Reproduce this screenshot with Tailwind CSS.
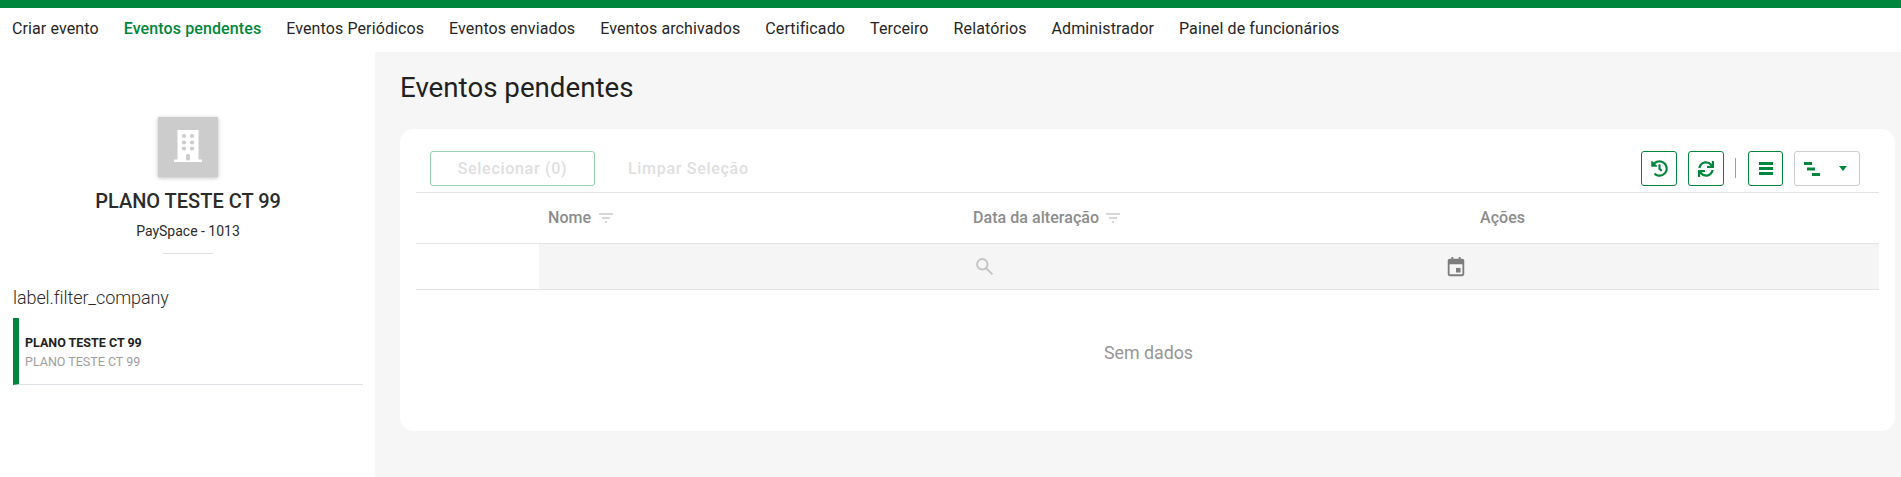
<!DOCTYPE html>
<html lang="pt">
<head>
<meta charset="utf-8">
<script src="https://cdn.jsdelivr.net/npm/@tailwindcss/browser@4"></script>
</head>
<body class="font-['Roboto',sans-serif] bg-white text-[#212121]">
<div class="w-[1901px] h-[477px] overflow-hidden flex flex-col">
  <div class="h-2 bg-[#00873d]"></div>
  <nav class="h-11 flex items-center pl-3 gap-[25px] text-[16px] tracking-[0.11px] leading-none text-[#262626] pb-[3px]">
    <span>Criar evento</span>
    <span class="font-medium text-[#00873d]">Eventos pendentes</span>
    <span>Eventos Periódicos</span>
    <span>Eventos enviados</span>
    <span>Eventos archivados</span>
    <span>Certificado</span>
    <span>Terceiro</span>
    <span>Relatórios</span>
    <span>Administrador</span>
    <span>Painel de funcionários</span>
  </nav>
  <div class="flex flex-1">
    <aside class="w-[375px] pl-[13px] pr-3 pt-[65px] flex flex-col">
      <div class="flex flex-col items-center">
        <div class="w-[60px] h-[60px] bg-[#cccccc] shadow-[0_1px_4px_rgba(0,0,0,0.25)] flex items-center justify-center">
          <svg class="mb-[2px]" width="28" height="32" viewBox="0 0 28 32" fill="#fff">
            <path d="M3.500 0h21v29.500H28V32H0v-2.500h3.500z"/>
            <g fill="#cccccc">
              <circle cx="10" cy="6" r="2.100"/><circle cx="18" cy="6" r="2.100"/>
              <circle cx="10" cy="12.500" r="2.100"/><circle cx="18" cy="12.500" r="2.100"/>
              <circle cx="10" cy="18.500" r="2.100"/><circle cx="18" cy="18.500" r="2.100"/>
              <rect x="12" y="24" width="4" height="6.500" rx="1.500"/>
            </g>
          </svg>
        </div>
        <div class="mt-[14px] text-[20px] leading-[20px] font-medium text-[#2b2b2b]">PLANO TESTE CT 99</div>
        <div class="mt-[12px] text-[14px] leading-[16px] text-[#2b2b2b]">PaySpace - 1013</div>
        <div class="mt-[14px] w-[50px] h-px bg-[#dddddd]"></div>
      </div>
      <div class="mt-[32px] text-[18px] tracking-[-0.1px] leading-[24px] font-light text-[#2b2b2b]">label.filter_company</div>
      <div class="mt-[8px] h-[67px] border-b border-[#e0e0e6] border-l-[6px] border-l-[#00873d] pl-[6px] pt-[17px] flex flex-col">
        <span class="text-[12.5px] leading-[16px] font-bold text-[#212121]">PLANO TESTE CT 99</span>
        <span class="mt-[3px] text-[12.5px] leading-[16px] text-[#9e9e9e]">PLANO TESTE CT 99</span>
      </div>
    </aside>
    <main class="flex-1 bg-[#f6f6f6] pl-[25px] pr-[6px] pt-5 flex flex-col">
      <h1 class="text-[27.7px] leading-[32px] text-[#212121]">Eventos pendentes</h1>
      <section class="mt-[25px] h-[302px] bg-white rounded-[14px] px-[16px] pt-[22px]">
        <div class="h-[41px] flex items-start pl-[14px] pr-[19px]">
          <button class="w-[165px] h-[35px] border border-[#99d0b1] rounded-[3px] text-[16px] font-medium tracking-[0.7px] text-[#e0e0e0]">Selecionar (0)</button>
          <span class="ml-[33px] h-[35px] flex items-center text-[16px] font-medium tracking-[0.7px] text-[#e0e0e0]">Limpar Seleção</span>
          <div class="ml-auto flex items-start">
            <button class="w-9 h-[35px] border border-[#00873d] rounded-[3px] flex items-center justify-center">
              <svg width="17" height="17" viewBox="0 0 512 512" fill="#00873d"><path d="M504 255.531c.253 136.64-111.18 248.372-247.82 248.468-59.015.042-113.223-20.53-155.822-54.911-11.077-8.94-11.905-25.541-1.839-35.607l11.267-11.267c8.609-8.609 22.353-9.551 31.891-1.984C173.062 425.135 212.781 440 256 440c101.705 0 184-82.311 184-184 0-101.705-82.311-184-184-184-48.814 0-93.149 18.969-126.068 49.932l50.754 50.754c10.08 10.08 2.941 27.314-11.313 27.314H24c-8.837 0-16-7.163-16-16V38.627c0-14.254 17.234-21.393 27.314-11.314l49.372 49.372C129.209 34.136 189.552 8 256 8c136.81 0 247.747 110.78 248 247.531zm-180.912 78.784l9.823-12.63c8.138-10.463 6.253-25.542-4.21-33.679L288 256.349V152c0-13.255-10.745-24-24-24h-16c-13.255 0-24 10.745-24 24v135.651l65.409 50.874c10.463 8.137 25.541 6.253 33.679-4.21z"/></svg>
            </button>
            <button class="ml-[11px] w-9 h-[35px] border border-[#00873d] rounded-[3px] flex items-center justify-center">
              <svg width="16" height="16" viewBox="0 0 512 512" fill="#00873d"><path d="M440.65 12.57l4 82.77A247.16 247.16 0 0 0 255.83 8C134.73 8 33.91 94.92 12.29 209.82A12 12 0 0 0 24.09 224h49.05a12 12 0 0 0 11.67-9.26 175.91 175.91 0 0 1 317-56.94l-101.46-4.86a12 12 0 0 0-12.57 12v47.41a12 12 0 0 0 12 12H500a12 12 0 0 0 12-12V12a12 12 0 0 0-12-12h-47.37a12 12 0 0 0-11.98 12.57zM255.83 432a175.61 175.61 0 0 1-146-77.8l101.8 4.87a12 12 0 0 0 12.57-12v-47.4a12 12 0 0 0-12-12H12a12 12 0 0 0-12 12V500a12 12 0 0 0 12 12h47.35a12 12 0 0 0 12-12.6l-4.15-82.57A247.17 247.17 0 0 0 255.83 504c121.11 0 221.93-86.92 243.55-201.82a12 12 0 0 0-11.8-14.18h-49.05a12 12 0 0 0-11.67 9.26A175.86 175.86 0 0 1 255.83 432z"/></svg>
            </button>
            <div class="ml-[11px] mt-[7px] w-px h-[20px] bg-[#9e9e9e]"></div>
            <button class="ml-3 w-[35px] h-[35px] border border-[#00873d] rounded-[3px] flex flex-col items-center justify-center gap-[1.500px]">
              <span class="w-[14px] h-[3.500px] bg-[#00873d]"></span>
              <span class="w-[14px] h-[3.500px] bg-[#00873d]"></span>
              <span class="w-[14px] h-[3.500px] bg-[#00873d]"></span>
            </button>
            <button class="ml-[11px] w-[66px] h-[35px] border border-[#cccccc] rounded-[3px] flex items-center pl-[9px]">
              <svg width="16" height="14" viewBox="0 0 16 14" fill="#00873d"><rect x="0" y="0" width="8" height="3"/><rect x="3" y="5.500" width="8" height="3"/><rect x="8" y="11" width="8" height="3"/></svg>
              <svg class="ml-[19px]" width="8" height="5" viewBox="0 0 8 5" fill="#00873d"><path d="M0 0h8L4 5z"/></svg>
            </button>
          </div>
        </div>
        <div class="border-t border-[#e3e3e3] h-[51px] pb-px grid grid-cols-[123px_425px_506px_1fr] items-center text-[16px] tracking-[0.05px] font-medium text-[#8c8c8c]">
          <div></div>
          <div class="pl-[9px] flex items-center gap-[8px]">Nome
            <svg width="14" height="10" viewBox="0 0 14 10" stroke="#b0b0b0" stroke-width="1"><path d="M0 1h14M3 5h8M6 9h2"/></svg>
          </div>
          <div class="pl-[9px] flex items-center gap-[7px]">Data da alteração
            <svg width="14" height="10" viewBox="0 0 14 10" stroke="#b0b0b0" stroke-width="1"><path d="M0 1h14M3 5h8M6 9h2"/></svg>
          </div>
          <div class="pl-[10px]">Ações</div>
        </div>
        <div class="border-y border-[#e3e3e3] h-[47px] grid grid-cols-[123px_425px_1fr] items-center">
          <div></div>
          <div class="col-start-2 col-end-4 h-full bg-[#f5f5f5] grid grid-cols-[425px_1fr] items-center">
            <div></div>
            <div class="flex items-center">
              <svg class="ml-[10px]" width="21" height="21" viewBox="0 0 24 24" fill="none" stroke="#c4c4c4" stroke-width="2.200"><circle cx="9.500" cy="9.500" r="6"/><path d="M14 14l7 7"/></svg>
              <svg class="ml-[450px]" width="22" height="22" viewBox="0 0 24 24" fill="#7d7d7d"><path d="M7 1h2v2h6V1h2v2h2a2 2 0 0 1 2 2v15a2 2 0 0 1-2 2H5a2 2 0 0 1-2-2V5a2 2 0 0 1 2-2h2zM5 9v11h14V9z"/><rect x="12" y="13" width="5" height="5"/></svg>
            </div>
          </div>
        </div>
        <div class="h-[124px] pt-[2px] pl-[2px] flex items-center justify-center text-[17.800px] text-[#969696]">Sem dados</div>
      </section>
    </main>
  </div>
</div>
</body>
</html>
